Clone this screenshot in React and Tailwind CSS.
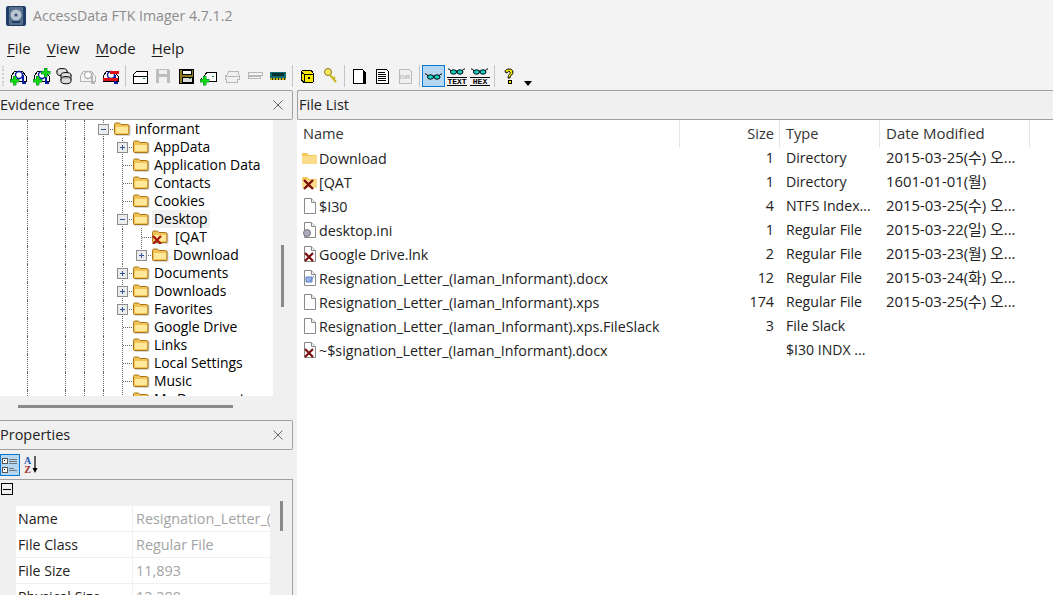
import React from 'react';

const C = ({ children, w = 18 }) => (
  <svg width={w} height="18" viewBox={`0 0 ${w} 18`} shapeRendering="crispEdges" className="mt-[2px]">{children}</svg>
);

// evidence "person over drive" base used by the first toolbar group
const Dome = ({ color = '#000', blue = '#0a1fa8' }) => (
  <>
    <path d="M1 13V8L5 3H12L16 8V13Z" fill="#f4f4f4" stroke={color} />
    <circle cx="9" cy="7" r="3.5" fill="#fff" stroke={blue} strokeWidth="1.4" shapeRendering="auto" />
    <path d="M13 7V15H16" fill="none" stroke={blue} strokeWidth="1.6" />
  </>
);
const Plus = ({ x = 0, y = 8 }) => (
  <path d={`M${x + 3} ${y}h3v3h3v3h-3v3h-3v-3h-3v-3h3z`} fill="#12d812" stroke="#063" strokeWidth="0.4" />
);
const Drive = ({ color = '#000', fill = '#fff' }) => (
  <>
    <path d="M2 7L6 3H16V15H2Z" fill={fill} stroke={color} />
    <path d="M2 8H16" stroke={color} />
    <rect x="12" y="10" width="2" height="1" fill={color === '#000' ? '#1a8a3a' : '#bbb'} />
  </>
);
const Glasses = ({ y = 8, ox = 0 }) => (
  <g shapeRendering="auto" transform={`translate(${ox} 0)`}>
    <path d={`M1 ${y - 3}Q2 ${y - 4} 4 ${y - 1}M9 ${y - 1}H10.5M15 ${y - 1}Q17 ${y - 4} 18 ${y - 3}`} fill="none" stroke="#000" />
    <ellipse cx="6.5" cy={y} rx="3" ry="2.2" fill="#13d0c8" stroke="#000" />
    <ellipse cx="13" cy={y} rx="3" ry="2.2" fill="#13d0c8" stroke="#000" />
  </g>
);
const IconWord = ({ word }) => (
  <>
    <Glasses y={4} />
    <path d="M0 9H20M0 17H20" stroke="#000" />
    <text x="10" y="15.5" textAnchor="middle" fontSize="8" fontWeight="700" fontFamily="Liberation Mono, monospace" shapeRendering="auto">{word}</text>
  </>
);

const tools = [
  <C><Dome /><Plus /></C>,
  <C><Dome /><Plus /><Plus x={8} y={0} /></C>,
  <C>
    {[2, 6, 10].map((y, i) => (
      <g key={i} shapeRendering="auto">
        <ellipse cx={i === 0 ? 6 : 10} cy={y + 1} rx="5" ry="2.4" fill={i === 2 ? '#bbb' : '#e5e5e5'} stroke="#000" />
        <path d={`M${i === 0 ? 1 : 5} ${y + 1}v2.5c0 3 10 3 10 0v-2.5`} fill="#ddd" stroke="#000" />
      </g>
    ))}
  </C>,
  <C><Dome color="#b5b5b5" blue="#b5b5b5" /></C>,
  <C><Dome /><rect x="1" y="10" width="15" height="3" fill="#e01010" /><rect x="8" y="3" width="9" height="3" fill="#e01010" /></C>,
  'sep',
  <C><Drive /></C>,
  <C>
    <path d="M2 1H14L16 3V15H2Z" fill="#bdbdbd" />
    <rect x="5" y="2" width="8" height="4" fill="#f0f0f0" />
    <rect x="5" y="9" width="8" height="6" fill="#f0f0f0" />
  </C>,
  <C>
    <path d="M2 1H16V15H2Z" fill="#8a7a20" stroke="#000" />
    <rect x="5" y="2" width="9" height="4" fill="#fff" stroke="#000" />
    <rect x="5" y="9" width="10" height="5" fill="#ddd" stroke="#000" />
    <rect x="12" y="10" width="2" height="1" fill="#1a8a3a" />
  </C>,
  <C>
    <path d="M4 9L7 4H16V13H1V10" fill="#fff" stroke="#000" />
    <rect x="12" y="8" width="2" height="1" fill="#1a8a3a" />
    <Plus x={0} y={8} />
  </C>,
  <C>
    <path d="M4 7L6 3H15L16 7V11H14V14H3V11H2V7Z" fill="#f0f0f0" stroke="#b8b8b8" />
    <path d="M3 8H16" stroke="#b8b8b8" />
  </C>,
  <C>
    <rect x="2" y="4" width="14" height="3" fill="#f5f5f5" stroke="#b8b8b8" />
    <rect x="2" y="8" width="12" height="2" fill="#f5f5f5" stroke="#b8b8b8" />
  </C>,
  <C>
    <rect x="1" y="4" width="16" height="6" fill="#0d6d6d" />
    <rect x="3" y="5" width="12" height="3" fill="#063030" />
    <path d="M1 10h16v2h-16z" fill="#c8b820" />
    <path d="M3 10v2M6 10v2M9 10v2M12 10v2M15 10v2" stroke="#222" />
  </C>,
  'sep',
  <C>
    <path d="M3 4L5 2H13L15 5V14L6 15L3 11Z" fill="#f5e800" stroke="#000" />
    <path d="M6 15V6H15M6 6L3 4" fill="none" stroke="#000" />
    <rect x="10" y="9" width="2" height="2" fill="#000" />
  </C>,
  <C>
    <circle cx="7" cy="4" r="3.5" fill="#f5e860" stroke="#8a7a20" shapeRendering="auto" />
    <path d="M9 7L15 14M12 11L14 9" fill="none" stroke="#c8b820" strokeWidth="2" shapeRendering="auto" />
  </C>,
  'sep',
  <C>
    <path d="M3 1H12L15 4V15H3Z" fill="#fff" stroke="#000" />
    <path d="M14 3V15H15" stroke="#000" strokeWidth="2" />
  </C>,
  <C>
    <path d="M3 1H13L15 3V15H3Z" fill="#fff" stroke="#000" />
    <path d="M5 4H12M5 6H13M5 8H13M5 10H13M5 12H13" stroke="#000" />
  </C>,
  <C>
    <path d="M3 1H13L15 3V15H3Z" fill="#f0f0f0" stroke="#bbb" />
    <text x="9" y="11" textAnchor="middle" fontSize="6" fontWeight="700" fill="#bbb" fontFamily="Liberation Sans, sans-serif" shapeRendering="auto">DIR</text>
  </C>,
  'sep',
  <div className="w-[23px] h-[22px] flex items-center justify-center bg-[#b3d7f3] border border-[#0a78d0]">
    <svg width="19" height="18" viewBox="0 0 19 18"><Glasses y={10} /></svg>
  </div>,
  <C w={20}><IconWord word="TEXT" /></C>,
  <C w={20}><IconWord word="HEX" /></C>,
  'sep',
  <C>
    <path d="M5 4C5 0 13 0 13 4C13 7 10 7 10 10H8C8 6 11 6 10 4C9 3 8 3 7 5Z" fill="#f5e800" stroke="#000" shapeRendering="auto" />
    <rect x="8" y="12" width="3" height="3" fill="#f5e800" stroke="#000" />
  </C>,
];

const TreeFolder = ({ x }) => (
  <svg width="17" height="14" viewBox="0 0 17 14" className="shrink-0">
    <rect x="1.5" y="3" width="15" height="11" rx="1" fill="#d8d8d8" />
    <path d="M0.5 11.5V2.5Q0.5 1 2 1H5.5L7 2.5H13.5Q15 2.5 15 4V11.5Q15 12.5 14 12.5H1.5Q0.5 12.5 0.5 11.5Z" fill="#f3c455" stroke="#a8741c" />
    <rect x="2" y="5" width="12" height="6" fill="#ffe89a" />
    {x && <path d="M1 6L9 14M9 6L1 14" stroke="#a81c10" strokeWidth="2.4" />}
  </svg>
);

const Dots = ({ d }) => <path d={d} stroke="#666" strokeDasharray="1 1" fill="none" shapeRendering="crispEdges" />;

const Node = ({ state, last }) => (
  <svg width="19" height="18" viewBox="0 0 19 18" className="shrink-0">
    <Dots d={last ? 'M9.5 0V9' : 'M9.5 0V18'} />
    <Dots d="M10 9.5H19" />
    {state && (
      <g shapeRendering="crispEdges">
        <rect x="4.5" y="4.5" width="10" height="10" fill="#ececec" stroke="#8c8c8c" />
        <path d="M7 9.5H12" stroke="#33549a" />
        {state === 'plus' && <path d="M9.5 7V12" stroke="#33549a" />}
      </g>
    )}
  </svg>
);

const Guide = ({ on }) => (
  <div className="w-[19px] h-full shrink-0 flex justify-center">
    {on && <div className="h-full border-l border-dotted border-[#666]" />}
  </div>
);

const treeRows = [
  { name: 'informant', depth: 4, state: 'minus' },
  { name: 'AppData', depth: 5, state: 'plus' },
  { name: 'Application Data', depth: 5 },
  { name: 'Contacts', depth: 5 },
  { name: 'Cookies', depth: 5 },
  { name: 'Desktop', depth: 5, state: 'minus', selected: true },
  { name: '[QAT', depth: 6, x: true },
  { name: 'Download', depth: 6, state: 'plus', last: true },
  { name: 'Documents', depth: 5, state: 'plus' },
  { name: 'Downloads', depth: 5, state: 'plus' },
  { name: 'Favorites', depth: 5, state: 'plus' },
  { name: 'Google Drive', depth: 5 },
  { name: 'Links', depth: 5 },
  { name: 'Local Settings', depth: 5 },
  { name: 'Music', depth: 5 },
  { name: 'My Documents', depth: 5 },
];

const TreeRow = ({ row }) => (
  <div className="flex items-center h-[18px] pl-[18px]">
    {[0, 1, 2, 3, 4, 5].slice(0, row.depth).map((i) => (
      <Guide key={i} on={i === 0 || i === 2 || i === 3 || i === 4 || (i === 5 && row.depth === 6)} />
    ))}
    <Node state={row.state} last={row.last} />
    <div className="ml-px flex items-center">
      <TreeFolder x={row.x} />
      <span className={`ml-[2px] px-[2px] h-[18px] leading-[17px] text-[13.9px] text-black whitespace-nowrap ${row.selected ? 'bg-[#f0f0f0]' : ''} ${row.x ? 'pl-[4px]' : ''}`}>
        {row.name}
      </span>
    </div>
  </div>
);

const ListFile = ({ kind }) => {
  if (kind === 'folder' || kind === 'folderx') {
    return (
      <svg width="15" height="15" viewBox="0 0 15 15" className="shrink-0">
        <path d="M0 3Q0 2 1 2H5L7 4H14Q15 4 15 5V12Q15 13 14 13H1Q0 13 0 12Z" fill="#f6c858" />
        <rect x="0" y="5" width="15" height="8" fill="#fbdc8a" />
        {kind === 'folderx' && <path d="M2 5L11 14M11 5L2 14" stroke="#7a1010" strokeWidth="2.4" />}
      </svg>
    );
  }
  return (
    <svg width="15" height="16" viewBox="0 0 15 16" className="shrink-0">
      <path d="M2.5 0.5H9.5L13.5 4.5V15.5H2.5Z" fill="#fff" stroke="#8a8a8a" />
      <path d="M9.5 0.5V4.5H13.5" fill="#eee" stroke="#8a8a8a" />
      {kind === 'ini' && <circle cx="5" cy="11" r="3.5" fill="#aab" stroke="#778" />}
      {kind === 'doc' && <path d="M4 7H10V12H4ZM8 11L12 6" fill="#9db8e8" stroke="#5a80c8" />}
      {kind === 'x' && <path d="M3 7L11 15M11 7L3 15" stroke="#7a1010" strokeWidth="2.2" />}
      {kind === 'docx' && <path d="M3 7L11 15M11 7L3 15" stroke="#7a1010" strokeWidth="2.2" />}
    </svg>
  );
};

const files = [
  ['folder', 'Download', '1', 'Directory', '2015-03-25(수) 오...'],
  ['folderx', '[QAT', '1', 'Directory', '1601-01-01(월)'],
  ['file', '$I30', '4', 'NTFS Index...', '2015-03-25(수) 오...'],
  ['ini', 'desktop.ini', '1', 'Regular File', '2015-03-22(일) 오...'],
  ['x', 'Google Drive.lnk', '2', 'Regular File', '2015-03-23(월) 오...'],
  ['doc', 'Resignation_Letter_(Iaman_Informant).docx', '12', 'Regular File', '2015-03-24(화) 오...'],
  ['file', 'Resignation_Letter_(Iaman_Informant).xps', '174', 'Regular File', '2015-03-25(수) 오...'],
  ['file', 'Resignation_Letter_(Iaman_Informant).xps.FileSlack', '3', 'File Slack', ''],
  ['docx', '~$signation_Letter_(Iaman_Informant).docx', '', '$I30 INDX ...', ''],
];

const props = [
  ['Name', 'Resignation_Letter_(Iaman_Informant).docx'],
  ['File Class', 'Regular File'],
  ['File Size', '11,893'],
  ['Physical Size', '12,288'],
];

const PanelTitle = ({ title, close, className }) => (
  <div className={`h-[30px] shrink-0 flex items-center justify-between border border-[#a0a0a0] rounded-[2px] bg-[#f0f0f0] text-[14.5px] text-[#222] ${className}`}>
    <span className="-mt-[1px]">{title}</span>
    {close && (
      <svg width="10" height="10" viewBox="0 0 10 10" className="mr-[9px]">
        <path d="M0.5 0.5L9.5 9.5M9.5 0.5L0.5 9.5" stroke="#666" />
      </svg>
    )}
  </div>
);

export default function App() {
  return (
    <div className="w-[1053px] h-[595px] overflow-hidden bg-[#f0f0f0] flex flex-col font-['Open_Sans','Noto_Sans_CJK_KR',sans-serif]">
      {/* title bar */}
      <div className="h-[32px] shrink-0 bg-[#f3f3f3] flex items-center pl-[6px]">
        <svg width="20" height="20" viewBox="0 0 20 20">
          <rect width="20" height="20" rx="2" fill="#1f3f66" />
          <rect x="3" y="1" width="14" height="18" rx="1" fill="#56708c" />
          <circle cx="10" cy="9" r="5.5" fill="#b8c4d0" />
          <circle cx="10" cy="9" r="1.6" fill="#38506a" />
          <path d="M6 16H14" stroke="#1f3f66" strokeWidth="2" />
        </svg>
        <span className="ml-[7px] text-[14.15px] text-[#8c8c8c]">AccessData FTK Imager 4.7.1.2</span>
      </div>

      {/* menu */}
      <div className="h-[32px] shrink-0 bg-[#f3f3f3] flex items-center pl-[7px] pt-px gap-[16px] text-[15px] text-[#1a1a1a]">
        {['File', 'View', 'Mode', 'Help'].map((m) => (
          <span key={m}>
            <span className="underline underline-offset-2">{m[0]}</span>
            {m.slice(1)}
          </span>
        ))}
      </div>

      {/* toolbar */}
      <div className="h-[26px] shrink-0 bg-[#f3f3f3] flex items-start pl-[2px] pt-px">
        <div className="w-[3px] h-[20px] mt-px mr-[2px] border-l-2 border-dotted border-[#d0d0d0]" />
        {tools.map((t, i) =>
          t === 'sep' ? (
            <div key={i} className="w-[6px] h-[22px] flex justify-center shrink-0">
              <div className="w-px h-full bg-[#c4c4c4]" />
            </div>
          ) : (
            <div key={i} className="w-[23px] h-[22px] flex items-center justify-center shrink-0">{t}</div>
          )
        )}
        <svg width="10" height="6" viewBox="0 0 10 6" className="ml-[3px] mt-[16px]">
          <path d="M1 0H9L5 5Z" fill="#000" />
        </svg>
      </div>

      <div className="flex-1 flex min-h-0">
        {/* left column */}
        <div className="w-[297px] shrink-0 flex flex-col min-h-0">
          <PanelTitle title="Evidence Tree" close className="w-[293px] border-l-0 rounded-l-none" />
          <div className="h-[276px] shrink-0 flex w-[293px]">
            <div className="w-[273px] bg-white overflow-hidden">
              {treeRows.map((r) => <TreeRow key={r.name} row={r} />)}
            </div>
            <div className="w-[20px] pl-[8px] pt-[125px]">
              <div className="w-[3px] h-[62px] bg-[#8a8a8a]" />
            </div>
          </div>
          <div className="h-[24px] shrink-0 pl-[18px] pt-[9px]">
            <div className="w-[215px] h-[3px] bg-[#8a8a8a]" />
          </div>
          <PanelTitle title="Properties" close className="w-[293px] border-l-0 rounded-l-none" />
          <div className="h-[29px] shrink-0 flex items-center gap-[3px]">
            <div className="w-[20px] h-[22px] bg-[#b3d7f3] border border-[#0a78d0] flex items-center justify-center">
              <svg width="18" height="18" viewBox="0 0 18 18" shapeRendering="crispEdges">
                <rect x="1" y="2" width="5" height="5" fill="#fff" stroke="#555" />
                <rect x="3" y="4" width="1" height="1" fill="#000" />
                <rect x="1" y="11" width="5" height="5" fill="#fff" stroke="#555" />
                <rect x="3" y="13" width="1" height="1" fill="#000" />
                <path d="M8 3H16M8 5H16M8 7H16M8 12H13M8 14H16" stroke="#777" />
              </svg>
            </div>
            <svg width="18" height="20" viewBox="0 0 18 20">
              <text x="4.5" y="8.5" textAnchor="middle" fontSize="10" fontWeight="700" fill="#2a50b0" fontFamily="Liberation Serif, serif">A</text>
              <text x="4.5" y="18" textAnchor="middle" fontSize="10" fontWeight="700" fill="#a02828" fontFamily="Liberation Serif, serif">Z</text>
              <path d="M12 1V14" stroke="#000" strokeWidth="1.2" />
              <path d="M9.5 13L12 18L14.5 13Z" fill="#000" />
            </svg>
          </div>
          <div className="flex-1 min-h-0 w-[293px] border-t border-r border-[#a0a0a0] flex text-[14.2px]">
            <div className="flex-1 min-w-0">
              <div className="h-[26px] pl-[1px] pt-[3px]">
                <svg width="12" height="12" viewBox="0 0 12 12" shapeRendering="crispEdges">
                  <rect x="0.5" y="0.5" width="11" height="11" fill="none" stroke="#000" />
                  <path d="M2 6H10" stroke="#000" />
                </svg>
              </div>
              {props.map(([k, v]) => (
                <div key={k} className="h-[26px] ml-[16px] mr-px flex bg-white border-b border-[#f0f0f0]">
                  <div className="w-[117px] shrink-0 pl-[2px] leading-[25px] text-[#222] border-r border-[#f0f0f0]">{k}</div>
                  <div className="flex-1 min-w-0 pl-[3px] leading-[25px] text-[14.4px] text-[#a3a3a3] overflow-hidden whitespace-nowrap">{v}</div>
                </div>
              ))}
            </div>
            <div className="w-[21px] shrink-0 pl-[9px] pt-[21px]">
              <div className="w-[3px] h-[30px] bg-[#8a8a8a]" />
            </div>
          </div>
        </div>

        {/* file list */}
        <div className="flex-1 min-w-0 flex flex-col">
          <PanelTitle title="File List" className="pl-px border-r-0 rounded-r-none" />
          <div className="flex-1 bg-white text-[14.3px] text-[#222]">
            <div className="grid grid-cols-[383px_100px_100px_150px] h-[26px] items-stretch leading-[27px] text-[14.6px] text-[#333]">
              <div className="pl-[6px] border-r border-[#e5e5e5]">Name</div>
              <div className="pr-[5px] text-right border-r border-[#e5e5e5]">Size</div>
              <div className="pl-[6px] border-r border-[#e5e5e5]">Type</div>
              <div className="pl-[6px] border-r border-[#e5e5e5] text-[15px]">Date Modified</div>
            </div>
            {files.map(([kind, name, size, type, date]) => (
              <div key={name} className="grid grid-cols-[383px_100px_100px_150px] h-[24px] leading-[23px]">
                <div className="pl-[5px] flex items-center gap-[2px] whitespace-nowrap">
                  <ListFile kind={kind} />
                  <span>{name}</span>
                </div>
                <div className="pr-[6px] text-right">{size}</div>
                <div className="pl-[6px] whitespace-nowrap text-[14.1px]">{type}</div>
                <div className="pl-[6px] whitespace-nowrap text-[14.9px]">{date}</div>
              </div>
            ))}
          </div>
        </div>
      </div>
    </div>
  );
}
